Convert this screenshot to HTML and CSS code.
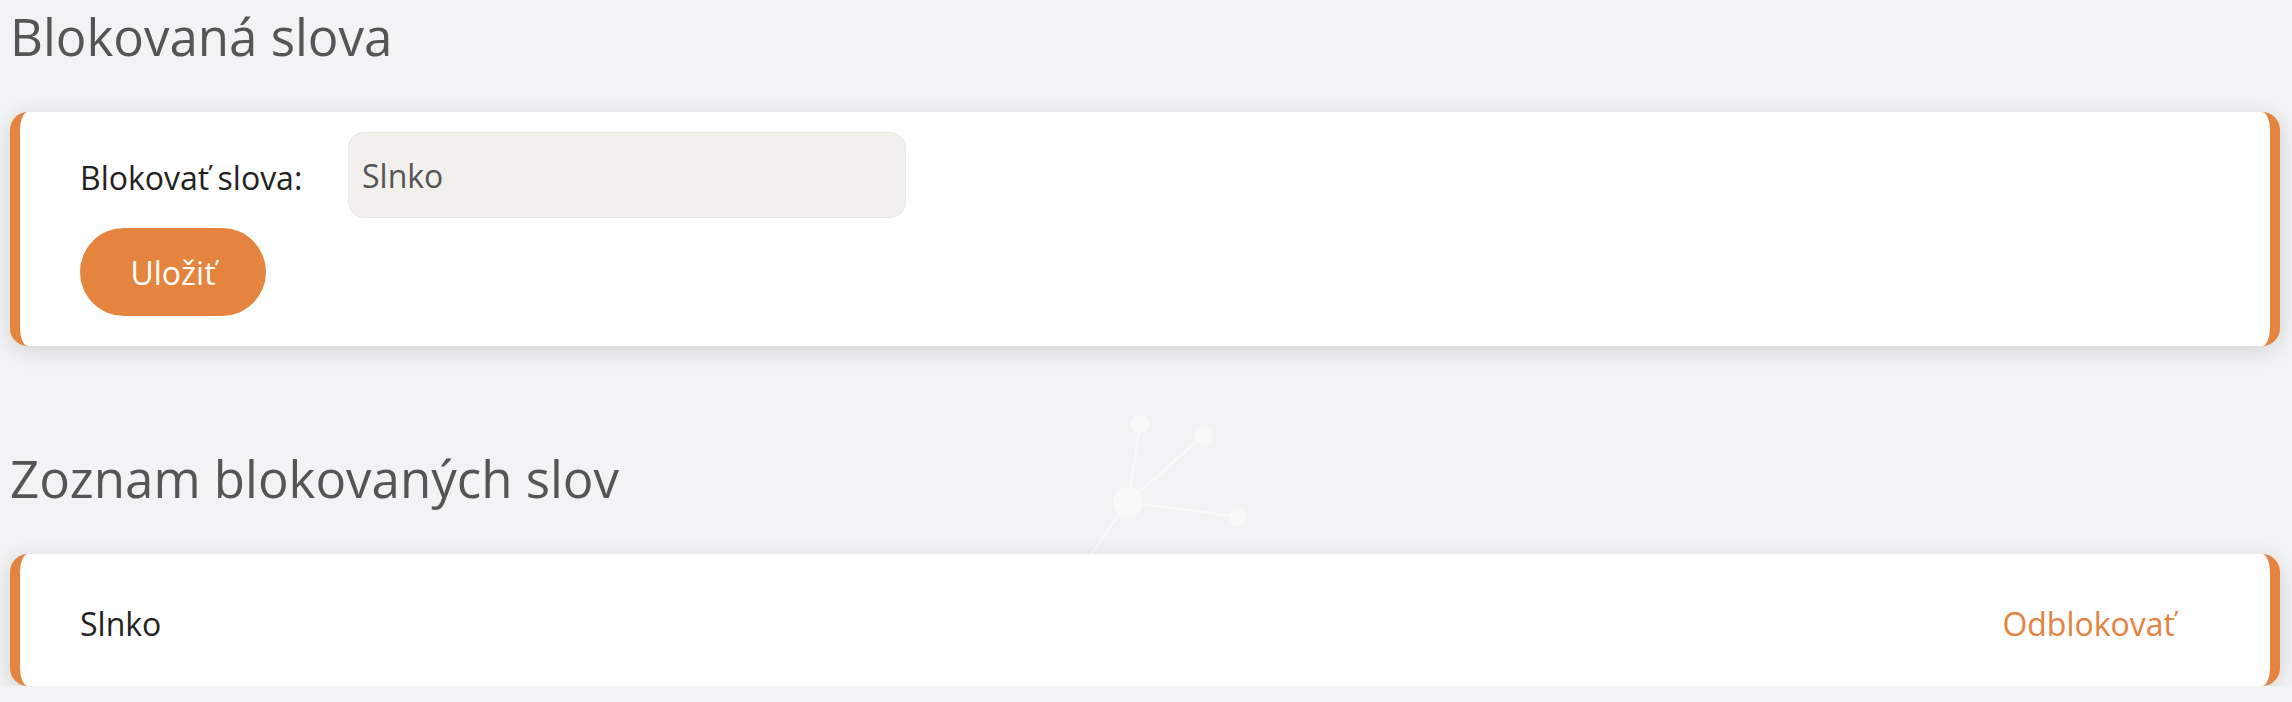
FILE: index.html
```html
<!DOCTYPE html>
<html lang="sk">
<head>
    <meta charset="UTF-8">
    <meta name="viewport" content="width=device-width, initial-scale=1.0">
    <title>Blokované slová</title>
    <link rel="stylesheet" href="styles.css">
</head>
<body>

    <!-- dekorácia pozadia -->
    <svg class="bg-network" width="240" height="200" viewBox="0 0 240 200">
        <g stroke="#f8f9f9" stroke-width="2.5" fill="none">
            <line x1="68" y1="122" x2="80" y2="44"/>
            <line x1="68" y1="122" x2="143" y2="56"/>
            <line x1="68" y1="122" x2="178" y2="137"/>
            <line x1="68" y1="122" x2="20" y2="190"/>
        </g>
        <g fill="#f8f9f9">
            <circle cx="68" cy="122" r="15"/>
            <circle cx="80" cy="44" r="9"/>
            <circle cx="143" cy="56" r="9"/>
            <circle cx="178" cy="137" r="9"/>
        </g>
    </svg>

    <h2 class="title">Blokovaná slova</h2>

    <div class="card card-form">
        <div class="form-row">
            <label for="slovo">Blokovať slova:</label>
            <input type="text" id="slovo" value="Slnko">
        </div>
        <button class="btn">Uložiť</button>
    </div>

    <h2 class="title title-list">Zoznam blokovaných slov</h2>

    <!-- Zoznam -->
    <div class="card card-item">
        <span class="word">Slnko</span>
        <a href="#" class="unblock">Odblokovať</a>
    </div>

</body>
</html>
```

FILE: styles.css
```css
body {
    margin: 0;
    padding: 0 12px 0 10px;
    font-family: "Open Sans", "Noto Sans", sans-serif;
    background-color: #f2f3f5;
    color: #222;
    position: relative;
    overflow: hidden;
}

.bg-network {
    position: absolute;
    top: 380px;
    left: 1060px;
    z-index: 0;
}

.title {
    position: relative;
    z-index: 1;
    font-size: 51px;
    line-height: 62px;
    font-weight: 400;
    color: #555;
    margin: 5px 0 45px 0;
}

.title-list {
    margin-top: 101px;
}

.card {
    position: relative;
    z-index: 1;
    background-color: #fff;
    border-left: 10px solid #e4843f;
    border-right: 10px solid #e4843f;
    border-radius: 18px;
    box-shadow: 0 4px 22px rgba(0, 0, 0, 0.13);
}

.card-form {
    padding: 20px 60px 30px 60px;
}

.form-row {
    display: flex;
    align-items: center;
}

label {
    width: 268px;
    font-size: 32px;
    color: #222;
    padding-top: 5px;
}

input {
    box-sizing: border-box;
    width: 558px;
    height: 86px;
    padding: 0 13px;
    border: 1px solid #e8e7e4;
    border-radius: 16px;
    background-color: #f1f0ed;
    font-family: inherit;
    font-size: 32px;
    color: #555;
    outline: none;
}

.btn {
    display: block;
    margin-top: 10px;
    width: 186px;
    height: 88px;
    border: none;
    border-radius: 44px;
    background-color: #e4843f;
    color: #fff;
    font-family: inherit;
    font-size: 32px;
    cursor: pointer;
}

.card-item {
    display: flex;
    justify-content: space-between;
    align-items: center;
    height: 132px;
    box-sizing: border-box;
    padding: 7px 95px 0 60px;
}

.word {
    font-size: 32px;
    color: #222;
}

.unblock {
    font-size: 32px;
    color: #e4823f;
    text-decoration: none;
}
```
